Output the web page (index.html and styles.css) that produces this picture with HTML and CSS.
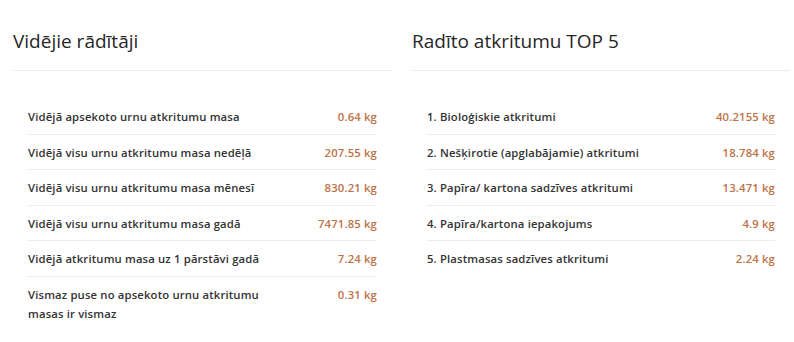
FILE: index.html
```html
<!DOCTYPE html>
<html lang="lv">
<head>
<meta charset="utf-8">
<link rel="stylesheet" href="styles.css">
</head>
<body>
<div class="grid">
  <section class="card">
    <h2 class="card-title">Vidējie rādītāji</h2>
    <ul class="stats">
      <li class="row"><span class="label">Vidējā apsekoto urnu atkritumu masa</span><span class="value">0.64 kg</span></li>
      <li class="row"><span class="label">Vidējā visu urnu atkritumu masa nedēļā</span><span class="value">207.55 kg</span></li>
      <li class="row"><span class="label">Vidējā visu urnu atkritumu masa mēnesī</span><span class="value">830.21 kg</span></li>
      <li class="row"><span class="label">Vidējā visu urnu atkritumu masa gadā</span><span class="value">7471.85 kg</span></li>
      <li class="row"><span class="label">Vidējā atkritumu masa uz 1 pārstāvi gadā</span><span class="value">7.24 kg</span></li>
      <li class="row"><span class="label">Vismaz puse no apsekoto urnu atkritumu masas ir vismaz</span><span class="value">0.31 kg</span></li>
    </ul>
  </section>
  <section class="card">
    <h2 class="card-title">Radīto atkritumu TOP 5</h2>
    <ul class="stats">
      <li class="row"><span class="label">1. Bioloģiskie atkritumi</span><span class="value">40.2155 kg</span></li>
      <li class="row"><span class="label">2. Nešķirotie (apglabājamie) atkritumi</span><span class="value">18.784 kg</span></li>
      <li class="row"><span class="label">3. Papīra/ kartona sadzīves atkritumi</span><span class="value">13.471 kg</span></li>
      <li class="row"><span class="label">4. Papīra/kartona iepakojums</span><span class="value">4.9 kg</span></li>
      <li class="row"><span class="label">5. Plastmasas sadzīves atkritumi</span><span class="value">2.24 kg</span></li>
    </ul>
  </section>
</div>
</body>
</html>
```

FILE: styles.css
```css
* { box-sizing: border-box; }
html, body { margin: 0; padding: 0; background: #fff; }
body {
  font-family: "Open Sans", "Noto Sans", sans-serif;
  color: #333;
  padding: 0 4px 0 13px;
}
.grid {
  display: grid;
  grid-template-columns: 379px 378px;
  column-gap: 20px;
}
.card { padding-top: 27px; }
.card-title {
  margin: 0;
  font-size: 19px;
  font-weight: 400;
  line-height: 28px;
  color: #262626;
  padding-bottom: 15px;
  border-bottom: 1px solid #ececec;
}
.stats {
  list-style: none;
  margin: 0;
  padding: 28px 15px 0;
}
.row {
  display: flex;
  justify-content: space-between;
  align-items: flex-start;
  gap: 20px;
  padding: 8px 0 7.5px;
  line-height: 19px;
  font-size: 11.3px;
  font-weight: 600;
  letter-spacing: 0.15px;
  border-bottom: 1px solid #ececec;
}
.row:last-child { border-bottom: none; }
.label { max-width: 245px; }
.value { color: #bd7246; white-space: nowrap; }
```
